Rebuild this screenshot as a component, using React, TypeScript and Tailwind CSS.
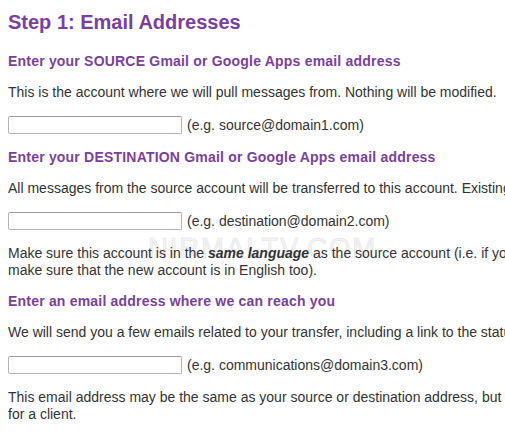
import React from 'react';

const font = { fontFamily: '"Liberation Sans", Arial, sans-serif' };

// 邮箱输入行
const EmailField: React.FC<{ example: string }> = ({ example }) => (
  <div className="flex items-center gap-[5px] h-[20px] mt-[14px]">
    <input
      type="text"
      className="w-[174px] h-[18px] border border-[#b4b4b4] border-t-[#9c9c9c] rounded-[2px] bg-white"
    />
    <span>{example}</span>
  </div>
);

const Heading: React.FC<{ children: React.ReactNode }> = ({ children }) => (
  <h3 className="mt-[14px] text-[14px] leading-[17px] font-bold tracking-[0.2px] text-[#7b3f9f]">{children}</h3>
);

const Para: React.FC<{ children: React.ReactNode }> = ({ children }) => (
  <p className="mt-[14px] leading-[17px]">{children}</p>
);

export default function App() {
  return (
    <div className="w-[505px] h-[444px] overflow-hidden bg-white relative" style={font}>
      {/* 水印 */}
      <div
        className="absolute left-[148px] top-[231px] text-[30px] leading-[34px] tracking-[2px] text-[#f4f4f4] pointer-events-none select-none origin-left scale-x-[0.92]"
        style={{ ...font, WebkitTextStroke: '0.5px #e0e0e0' }}
      >
        NIRMALTV.COM
      </div>

      <div className="w-[880px] px-[8px] pt-[11px] text-[14px] text-[#333] whitespace-nowrap relative">
        <h2 className="text-[20px] leading-[23px] font-bold text-[#7b3f9f] mb-[19px]">Step 1: Email Addresses</h2>

        <Heading>Enter your SOURCE Gmail or Google Apps email address</Heading>
        <Para>This is the account where we will pull messages from. Nothing will be modified.</Para>
        <EmailField example="(e.g. source@domain1.com)" />

        <Heading>Enter your DESTINATION Gmail or Google Apps email address</Heading>
        <Para>
          All messages from the source account will be transferred to this account. Existing messages will not be touched.
        </Para>
        <EmailField example="(e.g. destination@domain2.com)" />
        <Para>
          Make sure this account is in the <b><i>same language</i></b> as the source account (i.e. if your source account is in English,
          <br />
          make sure that the new account is in English too).
        </Para>

        <Heading>Enter an email address where we can reach you</Heading>
        <Para>We will send you a few emails related to your transfer, including a link to the status page.</Para>
        <EmailField example="(e.g. communications@domain3.com)" />
        <Para>
          This email address may be the same as your source or destination address, but it can be different if you are doing a transfer
          <br />
          for a client.
        </Para>
      </div>
    </div>
  );
}
